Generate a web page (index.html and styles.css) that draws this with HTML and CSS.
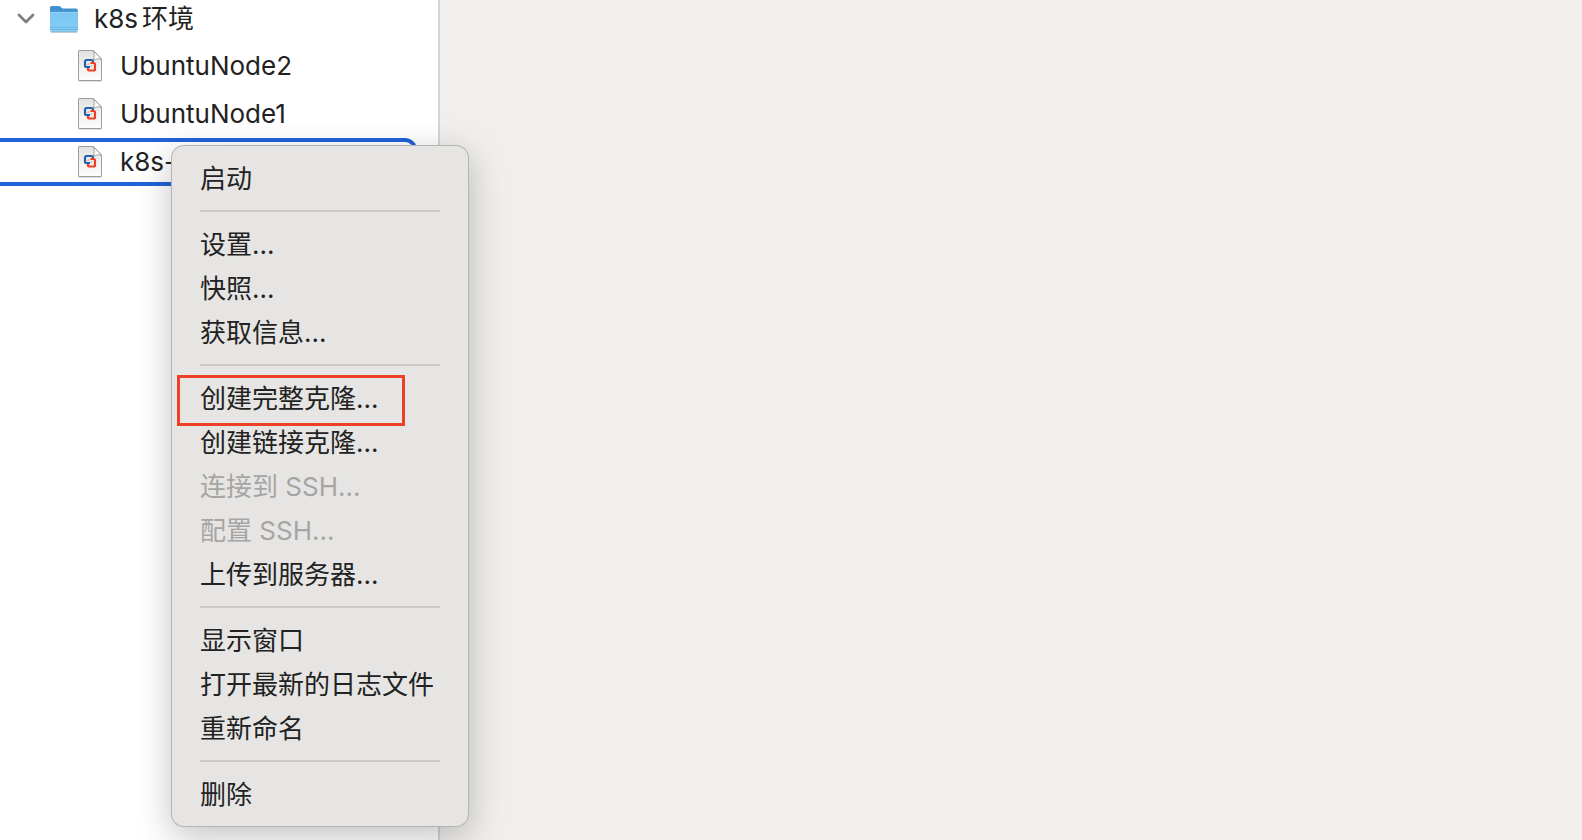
FILE: index.html
```html
<!DOCTYPE html>
<html lang="zh-CN">
<head>
<meta charset="utf-8">
<title>虚拟机资源库</title>
<link rel="stylesheet" href="styles.css">
</head>
<body>
<svg class="defs" aria-hidden="true">
  <defs>
    <linearGradient id="paper" x1="0" y1="0" x2="0" y2="1">
      <stop offset="0" stop-color="#e2e2e2"/><stop offset="1" stop-color="#fdfdfd"/>
    </linearGradient>
    <linearGradient id="folder" x1="0" y1="0" x2="0" y2="1">
      <stop offset="0" stop-color="#7cc6f4"/><stop offset="1" stop-color="#84cdf9"/>
    </linearGradient>
    <symbol id="vm" viewBox="0 0 26 32">
      <path d="M2 .5h14.500l8 8.500v21a.5.5 0 0 1-.5.5H2a.5.5 0 0 1-.5-.5V1a.5.5 0 0 1 .5-.5z" fill="url(#paper)" stroke="#a0a0a0"/>
      <path d="M1.500 31h23" stroke="#8b8b8b" stroke-opacity=".5"/>
      <path d="M16.500 .8q1.500 4.500.2 9 3.500-1.600 7.800-.6z" fill="#fff" stroke="#929292" stroke-width=".8"/>
      <path d="M16 13.500V11.500a1.500 1.500 0 0 0-1.500-1.500H9.500a1.500 1.500 0 0 0-1.500 1.500V15.500a1.500 1.500 0 0 0 1.500 1.500H13" fill="none" stroke="#2461a9" stroke-width="2.200"/>
      <path d="M11 18v1a1.500 1.500 0 0 0 1.500 1.500h4a1.500 1.500 0 0 0 1.500-1.500V14.500a1.500 1.500 0 0 0-1.500-1.500H13.500" fill="none" stroke="#f03c23" stroke-width="2.200"/>
      <path d="M10.500 15l1.500-1.500" stroke="#f2a79c" stroke-width="1.500"/>
      <path d="M13.500 16.500l1.500-1.300" stroke="#9db8da" stroke-width="1.500"/>
    </symbol>
  </defs>
</svg>
<div class="window">
  <nav class="sidebar" aria-label="虚拟机">
    <button class="row group" aria-expanded="true">
      <svg class="chevron" viewBox="0 0 18 12"><path d="M2 2l7 7 7-7" fill="none" stroke="#7f7f7f" stroke-width="2.800" stroke-linecap="round" stroke-linejoin="round"/></svg>
      <svg class="folder" viewBox="0 0 30 28">
        <path d="M1 25V2.500A1.500 1.500 0 0 1 2.500 1h7.300q.8 0 1.500.6l1.500 1.300q.7.600 1.500.6h12.200A2 2 0 0 1 28.800 5.500V25z" fill="#3f90cb"/>
        <path d="M1 7h27.800v18.200a1.500 1.500 0 0 1-1.500 1.500H2.500A1.500 1.500 0 0 1 1 25.200z" fill="url(#folder)"/>
        <path d="M1 7.300h27.800" stroke="#9bd6fb" stroke-width=".8"/>
        <path d="M1 22.300h27.800M1 24.500h27.800" stroke="#64aedd" stroke-width=".7"/>
        <path d="M2 27h26" stroke="#7f9cb0" stroke-width="1"/>
      </svg>
      <span>k8s<span class="cjk">环境</span></span>
    </button>
    <button class="row"><svg class="vm"><use href="#vm"/></svg><span>UbuntuNode2</span></button>
    <button class="row"><svg class="vm"><use href="#vm"/></svg><span>UbuntuNode1</span></button>
    <button class="row selected"><svg class="vm"><use href="#vm"/></svg><span>k8s-</span></button>
  </nav>
  <main class="content"></main>
  <div class="menu" role="menu">
    <button class="item" role="menuitem">启动</button>
    <hr class="sep">
    <button class="item" role="menuitem">设置...</button>
    <button class="item" role="menuitem">快照...</button>
    <button class="item" role="menuitem">获取信息...</button>
    <hr class="sep">
    <button class="item marked" role="menuitem">创建完整克隆...</button>
    <button class="item" role="menuitem">创建链接克隆...</button>
    <button class="item" role="menuitem" disabled>连接到 SSH...</button>
    <button class="item" role="menuitem" disabled>配置 SSH...</button>
    <button class="item" role="menuitem">上传到服务器...</button>
    <hr class="sep">
    <button class="item" role="menuitem">显示窗口</button>
    <button class="item" role="menuitem">打开最新的日志文件</button>
    <button class="item" role="menuitem">重新命名</button>
    <hr class="sep">
    <button class="item" role="menuitem">删除</button>
  </div>
</div>
</body>
</html>
```
FILE: styles.css
```css
*, *::after { box-sizing: border-box; }

body {
  margin: 0;
  overflow: hidden;
  font-family: Inter, "Noto Sans CJK SC", sans-serif;
  font-size: 26px;
  color: #222;
  background: #f0efed;
}

button {
  font: inherit;
  color: inherit;
  background: none;
  border: 0;
  margin: 0;
  padding: 0;
  text-align: left;
}

.defs { position: absolute; width: 0; height: 0; }

.window {
  position: relative;
  display: flex;
  min-height: 100vh;
}

.sidebar {
  flex: 0 0 440px;
  display: flex;
  flex-direction: column;
  background: #fff;
  border-right: 2px solid #d6d5d4;
}

.content { flex: 1; }

.row {
  display: flex;
  align-items: center;
  height: 48px;
  margin-right: 21px;
  padding-left: 77px;
  line-height: 32px;
  white-space: nowrap;
}

.group {
  height: 42px;
  padding-left: 17px;
  padding-bottom: 4px;
}

.selected {
  border: 4px solid #2163d8;
  border-left: 0;
  border-radius: 0 12px 12px 0;
}

.chevron { width: 18px; height: 12px; margin-right: 14px; }
.folder { width: 30px; height: 28px; margin-right: 15px; }
.vm { width: 26px; height: 32px; margin-right: 17px; }
.cjk { margin-left: 4px; }

.menu {
  position: absolute;
  left: 172px;
  top: 146px;
  width: 296px;
  padding: 10px 28px;
  display: flex;
  flex-direction: column;
  background: #e6e5e3;
  border-radius: 12px;
  box-shadow: 0 0 0 1px #b4b4b3, 0 10px 36px rgba(0, 0, 0, .25);
}

.item {
  position: relative;
  height: 44px;
  padding-top: 2px;
  line-height: 42px;
  white-space: nowrap;
}

.item:disabled { color: #a6a5a4; }

.marked::after {
  content: "";
  position: absolute;
  left: -23px;
  top: -1px;
  width: 228px;
  height: 51px;
  border: 3px solid #ec4127;
}

.sep {
  width: 100%;
  height: 2px;
  margin: 10px 0;
  border: 0;
  background: #cac9c7;
}
```
